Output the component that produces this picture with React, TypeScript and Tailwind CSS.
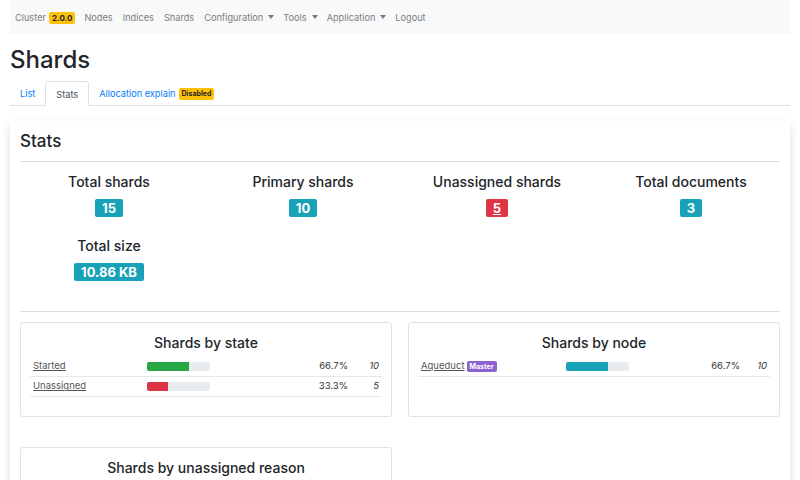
import React from "react";

const font = { fontFamily: 'Inter, "Liberation Sans", Arial, sans-serif' };

function Caret() {
  return <span className="ml-[5px] inline-block w-0 h-0 border-x-[3.5px] border-x-transparent border-t-[4px] border-t-[#7a7a7a] align-middle" />;
}

function StatItem({ label, value, red }: { label: string; value: string; red?: boolean }) {
  return (
    <div className="flex flex-col items-center">
      <div className="text-[14px] font-medium text-[#212529] leading-[18px] h-[18px]">{label}</div>
      <div
        className={`mt-[8px] h-[18px] px-[7px] rounded-[2px] text-[13px] font-bold text-white leading-[18px] ${red ? "bg-[#dc3545] underline" : "bg-[#17a2b8]"}`}
      >
        {value}
      </div>
    </div>
  );
}

function BarRow({ label, pct, count, color, width }: { label: string; pct: string; count: string; color: string; width: number }) {
  return (
    <div className="flex items-center h-[20px] border-b border-[#e5e7ea] text-[9.5px] text-[#333]">
      <div className="w-[117px] pl-[3px]">
        <span className="underline text-[#555]">{label}</span>
      </div>
      <div className="w-[63px] h-[9px] rounded-[2px] bg-[#e9ecef] overflow-hidden">
        <div className="h-full" style={{ width: `${width}%`, backgroundColor: color }} />
      </div>
      <div className="flex-1 text-right">{pct}</div>
      <div className="w-[34px] text-right italic pr-[3px]">{count}</div>
    </div>
  );
}

export default function App() {
  return (
    <div className="w-[800px] h-[480px] overflow-hidden bg-white text-[#212529]" style={font}>
      <div className="mx-[10px]">
        {/* Navbar */}
        <div className="h-[34px] bg-[#f8f9fa] flex items-center pl-[5px] pt-[1px] text-[9.2px] text-[#7d7d7d]">
          <span>Cluster</span>
          <span className="ml-[3px] px-[3px] h-[12px] leading-[12px] rounded-[2px] bg-[#ffc107] text-[#212529] text-[8px] font-bold">2.0.0</span>
          <span className="ml-[9px]">Nodes</span>
          <span className="ml-[10px]">Indices</span>
          <span className="ml-[10px]">Shards</span>
          <span className="ml-[10px] flex items-center">Configuration<Caret /></span>
          <span className="ml-[9px] flex items-center">Tools<Caret /></span>
          <span className="ml-[9px] flex items-center">Application<Caret /></span>
          <span className="ml-[9px]">Logout</span>
        </div>

        {/* Title */}
        <h1 className="mt-[12px] text-[24px] font-medium leading-[28px] text-[#212529]">Shards</h1>

        {/* Tabs */}
        <div className="mt-[7px] flex items-end h-[25px] border-b border-[#dee2e6] text-[9.2px]">
          <div className="px-[10px] h-[24px] leading-[25px] text-[#007bff]">List</div>
          <div className="px-[10px] h-[25px] leading-[25px] border border-b-0 border-[#dee2e6] rounded-t-[3px] bg-white text-[#495057] -mb-px">Stats</div>
          <div className="px-[10px] h-[24px] pt-[1px] flex items-center text-[#007bff]">
            Allocation explain
            <span className="ml-[3px] px-[3px] h-[12px] leading-[12px] rounded-[2px] bg-[#ffc107] text-[#212529] text-[7px] font-bold">Disabled</span>
          </div>
        </div>

        {/* Card */}
        <div className="mt-[15px] rounded-[3px] bg-white shadow-[0_4px_10px_rgba(0,0,0,0.13)] px-[10px] pt-[10px] h-[400px]">
          <div className="text-[17px] font-medium leading-[20px] h-[20px]">Stats</div>
          <div className="mt-[10px] border-t border-[#dcdcdc]" />

          <div className="-mx-[8px] mt-[11px] grid grid-cols-4 gap-y-[20px]">
            <StatItem label="Total shards" value="15" />
            <StatItem label="Primary shards" value="10" />
            <StatItem label="Unassigned shards" value="5" red />
            <StatItem label="Total documents" value="3" />
            <StatItem label="Total size" value="10.86 KB" />
          </div>

          <div className="mt-[30px] border-t border-[#dcdcdc]" />

          <div className="mt-[10px] grid grid-cols-2 gap-x-[16px] gap-y-[30px]">
            <div className="h-[95px] border border-[#dfe2e5] rounded-[3px] px-[9px] pt-[11px]">
              <div className="text-center text-[14px] font-medium leading-[18px]">Shards by state</div>
              <div className="mt-[5px]">
                <BarRow label="Started" pct="66.7%" count="10" color="#28a745" width={67} />
                <BarRow label="Unassigned" pct="33.3%" count="5" color="#dc3545" width={33} />
              </div>
            </div>
            <div className="h-[95px] border border-[#dfe2e5] rounded-[3px] px-[9px] pt-[11px]">
              <div className="text-center text-[14px] font-medium leading-[18px]">Shards by node</div>
              <div className="mt-[5px]">
                <div className="flex items-center h-[20px] border-b border-[#e5e7ea] text-[9.5px] text-[#333]">
                  <div className="w-[148px] pl-[3px] flex items-center">
                    <span className="underline text-[#555]">Aqueduct</span>
                    <span className="ml-[2px] px-[3px] h-[11px] leading-[11px] rounded-[2px] bg-[#8e60d0] text-white text-[7px] font-bold">Master</span>
                  </div>
                  <div className="w-[63px] h-[9px] rounded-[2px] bg-[#e9ecef] overflow-hidden">
                    <div className="h-full bg-[#17a2b8]" style={{ width: "67%" }} />
                  </div>
                  <div className="flex-1 text-right">66.7%</div>
                  <div className="w-[30px] text-right italic pr-[3px]">10</div>
                </div>
              </div>
            </div>
            <div className="h-[95px] border border-[#dfe2e5] rounded-[3px] px-[9px] pt-[11px]">
              <div className="text-center text-[14px] font-medium leading-[18px]">Shards by unassigned reason</div>
            </div>
          </div>
        </div>
      </div>
    </div>
  );
}
